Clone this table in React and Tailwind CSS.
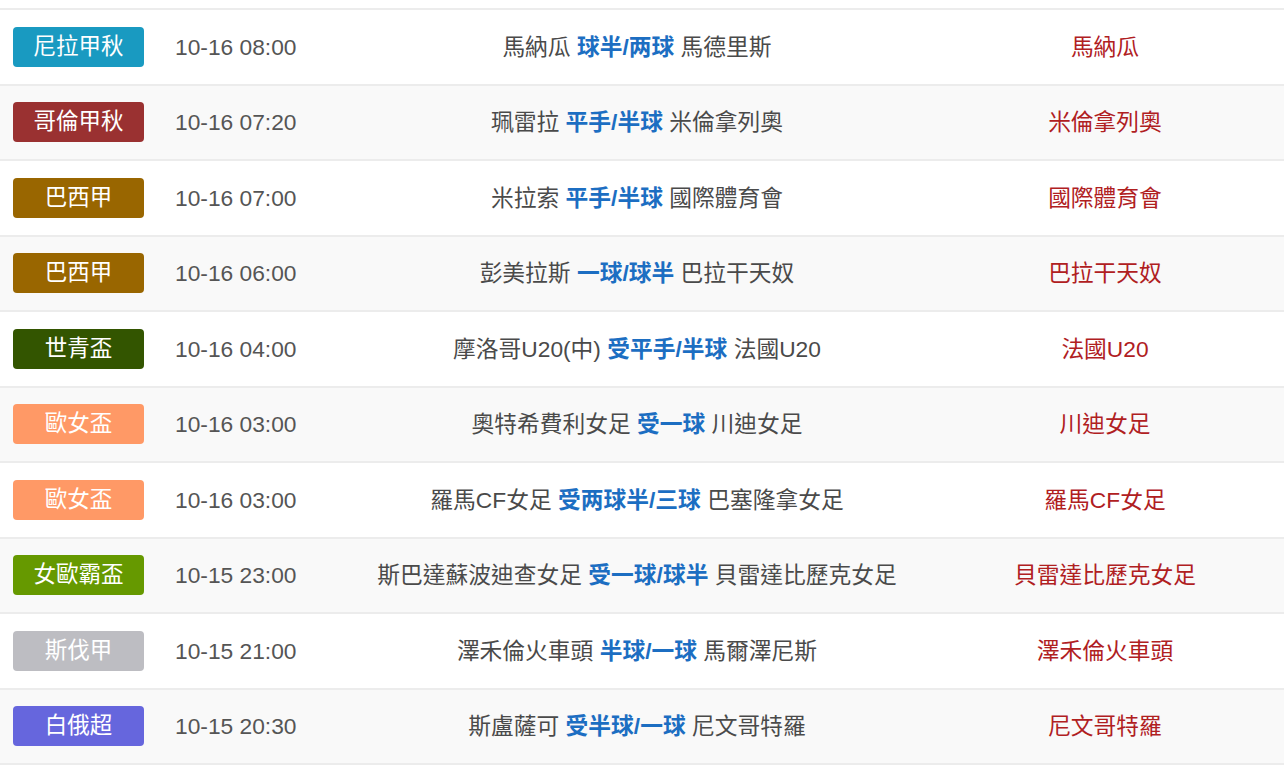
const matches = [
  { league: '尼拉甲秋', color: 'bg-[#199ac1]', time: '10-16 08:00', home: '馬納瓜', line: '球半/两球', away: '馬德里斯', pick: '馬納瓜' },
  { league: '哥倫甲秋', color: 'bg-[#9a3131]', time: '10-16 07:20', home: '珮雷拉', line: '平手/半球', away: '米倫拿列奧', pick: '米倫拿列奧' },
  { league: '巴西甲', color: 'bg-[#996600]', time: '10-16 07:00', home: '米拉索', line: '平手/半球', away: '國際體育會', pick: '國際體育會' },
  { league: '巴西甲', color: 'bg-[#996600]', time: '10-16 06:00', home: '彭美拉斯', line: '一球/球半', away: '巴拉干天奴', pick: '巴拉干天奴' },
  { league: '世青盃', color: 'bg-[#335500]', time: '10-16 04:00', home: '摩洛哥U20(中)', line: '受平手/半球', away: '法國U20', pick: '法國U20' },
  { league: '歐女盃', color: 'bg-[#ff9966]', time: '10-16 03:00', home: '奧特希費利女足', line: '受一球', away: '川迪女足', pick: '川迪女足' },
  { league: '歐女盃', color: 'bg-[#ff9966]', time: '10-16 03:00', home: '羅馬CF女足', line: '受两球半/三球', away: '巴塞隆拿女足', pick: '羅馬CF女足' },
  { league: '女歐霸盃', color: 'bg-[#669900]', time: '10-15 23:00', home: '斯巴達蘇波迪查女足', line: '受一球/球半', away: '貝雷達比歷克女足', pick: '貝雷達比歷克女足' },
  { league: '斯伐甲', color: 'bg-[#bdbdc2]', time: '10-15 21:00', home: '澤禾倫火車頭', line: '半球/一球', away: '馬爾澤尼斯', pick: '澤禾倫火車頭' },
  { league: '白俄超', color: 'bg-[#6666dd]', time: '10-15 20:30', home: '斯盧薩可', line: '受半球/一球', away: '尼文哥特羅', pick: '尼文哥特羅' },
]

export default function App() {
  return (
    <div
      className="w-[1284px] h-[766px] overflow-hidden bg-white pt-[8px]"
      style={{ fontFamily: '"Liberation Sans", "Noto Sans CJK TC", sans-serif' }}
    >
      <div className="border-t-2 border-[#ececec]">
        {matches.map((m, i) => (
          <div
            key={i}
            className={`grid grid-cols-[160px_180px_594px_342px] items-center h-[75.5px] border-b-2 border-[#ececec] ${i % 2 === 1 ? 'bg-[#f9f9f9]' : 'bg-white'}`}
          >
            <div className="pl-[13px]">
              <div className={`w-[131px] h-[40px] rounded-[4px] flex items-center justify-center text-white text-[22.5px] ${m.color}`}>
                {m.league}
              </div>
            </div>
            <div className="pl-[15px] text-[22.75px] text-[#555555] whitespace-nowrap">{m.time}</div>
            <div className="text-center text-[22.75px] text-[#4a4a4a] whitespace-nowrap">
              {m.home} <span className="font-bold text-[#1c6ec2]">{m.line}</span> {m.away}
            </div>
            <div className="text-center text-[22.75px] text-[#b0201f] whitespace-nowrap">{m.pick}</div>
          </div>
        ))}
      </div>
    </div>
  )
}
